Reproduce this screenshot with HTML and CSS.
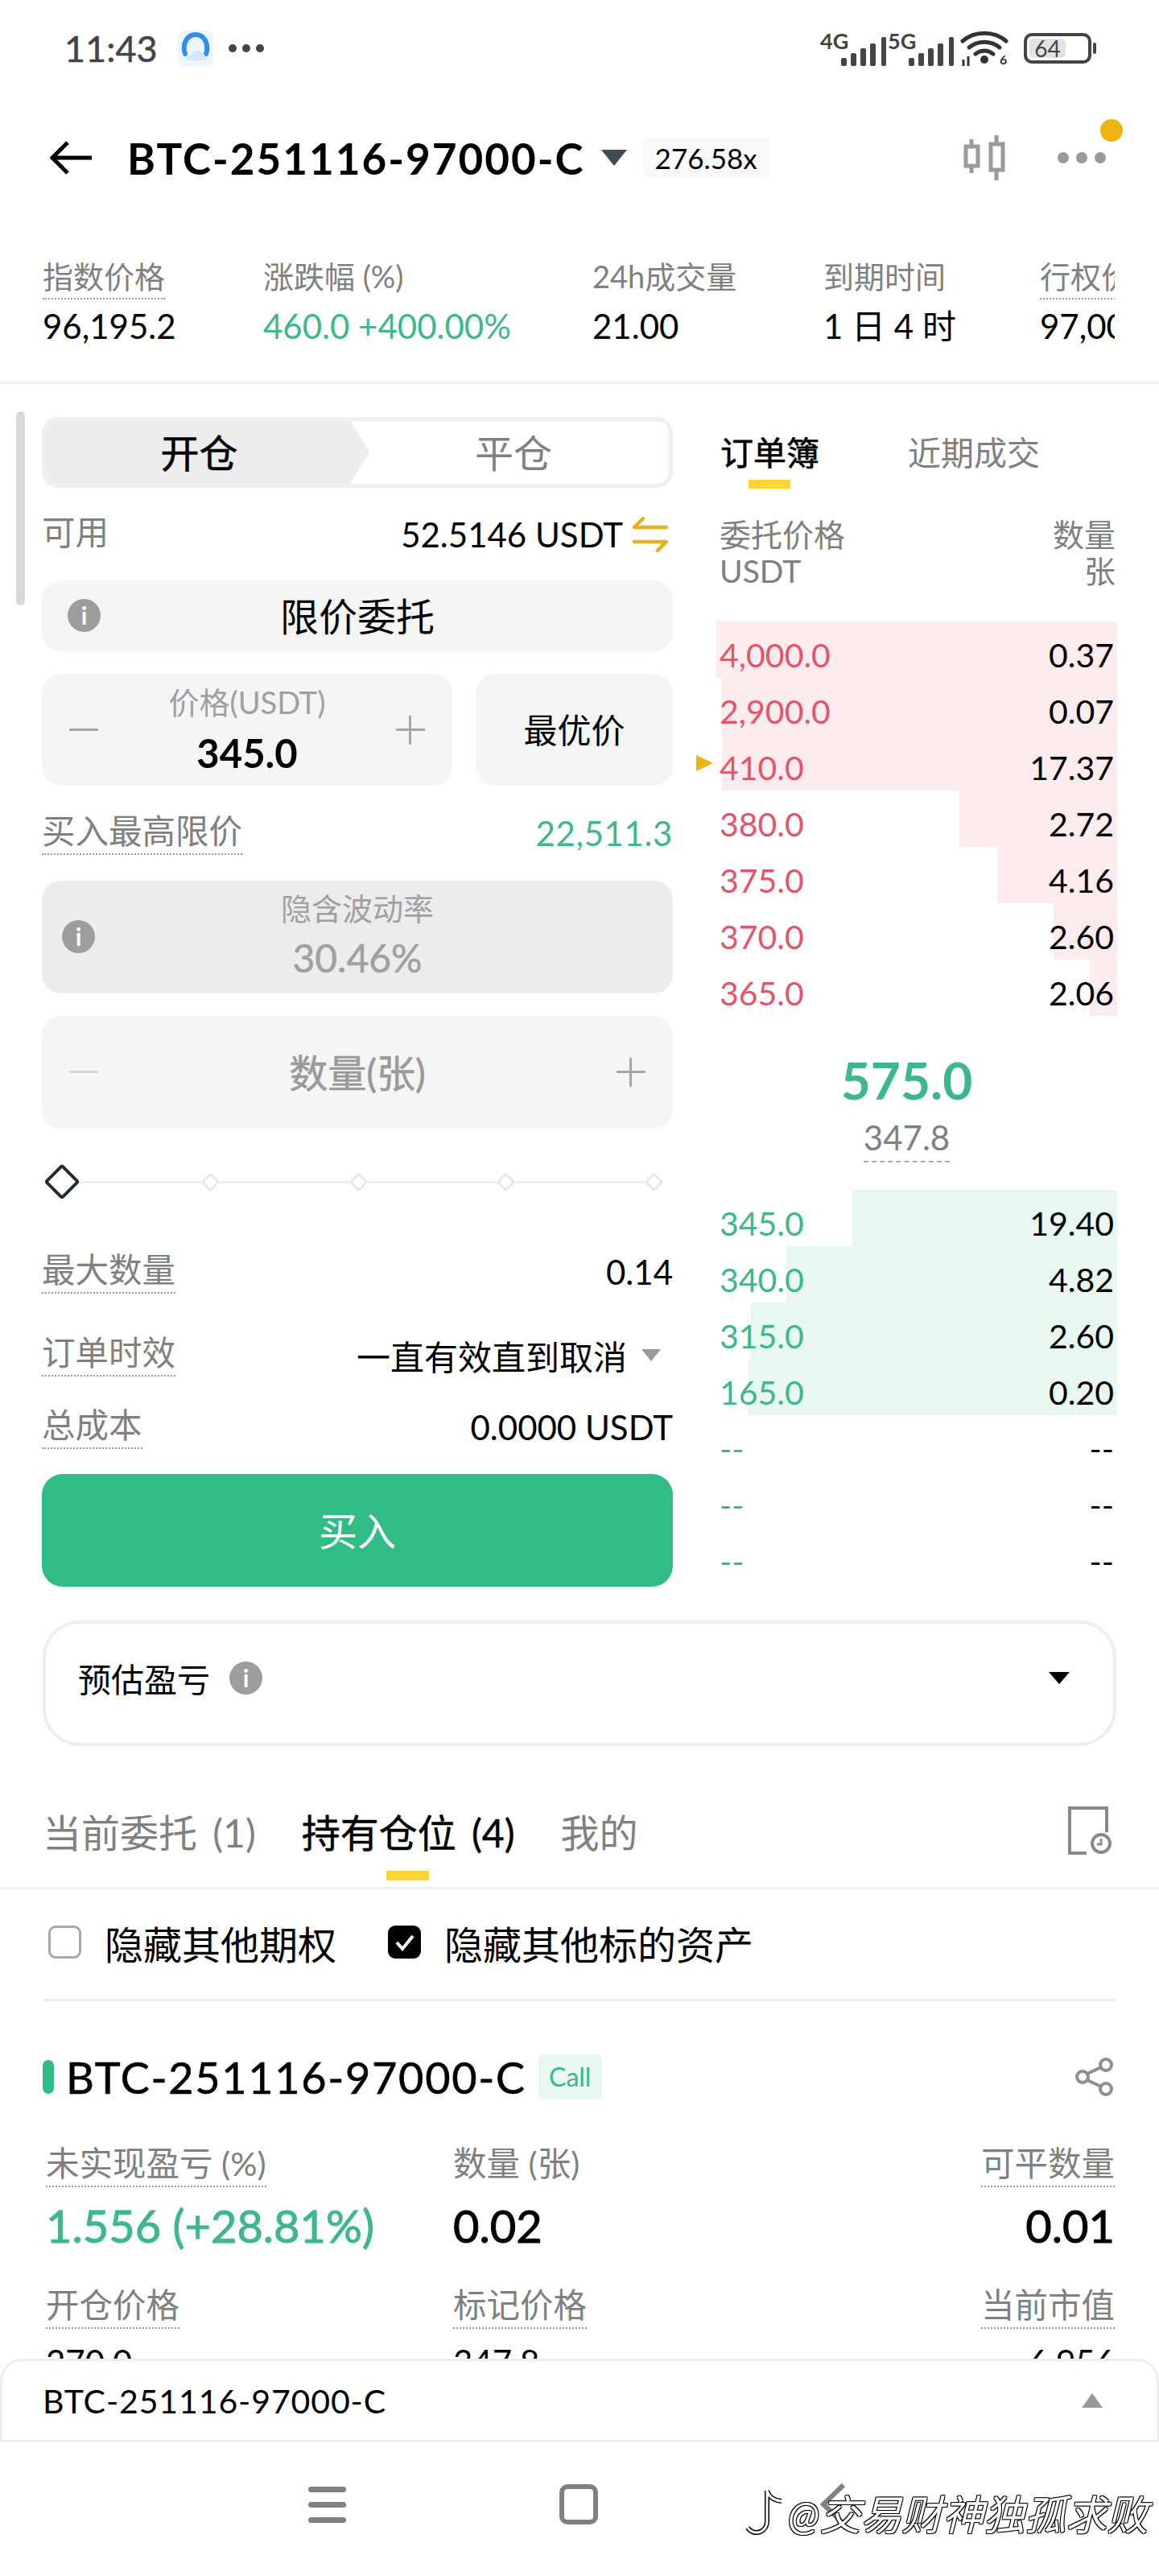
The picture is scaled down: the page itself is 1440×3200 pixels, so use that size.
FILE: index.html
```html
<!DOCTYPE html>
<html lang="zh-CN">
<head>
    <meta charset="UTF-8">
    <title>BTC-251116-97000-C</title>
    <link rel="stylesheet" href="styles.css">
</head>
<body>
    <div class="status">
        <span class="time">11:43</span>
        <svg class="app-logo" width="46" height="46" viewBox="0 0 46 46">
            <rect x="1" y="0" width="44" height="46" rx="10" fill="#eef5fd"/>
            <path d="M10 30C6 18 12 6 23 6s17 12 13 24" fill="none" stroke="#2f8ff0" stroke-width="6" stroke-linecap="round"/>
            <path d="M12 38c1-6 5-8 8-8 1-5 8-6 10-1 4 0 6 4 6 9H12z" fill="#d5e8fb"/>
        </svg>
        <span class="status-dots"><i></i><i></i><i></i></span>
        <div class="status-right">
            <div class="signal">
                <b>4G</b>
                <svg width="58" height="36" viewBox="0 0 58 36"><g fill="#444"><rect x="0" y="26" width="7" height="10" rx="2"/><rect x="12" y="20" width="7" height="16" rx="2"/><rect x="24" y="14" width="7" height="22" rx="2"/><rect x="36" y="8" width="7" height="28" rx="2"/><rect x="50" y="0" width="6" height="36" rx="2"/></g></svg>
            </div>
            <div class="signal">
                <b>5G</b>
                <svg width="58" height="36" viewBox="0 0 58 36"><g fill="#444"><rect x="0" y="26" width="7" height="10" rx="2"/><rect x="12" y="20" width="7" height="16" rx="2"/><rect x="24" y="14" width="7" height="22" rx="2"/><rect x="36" y="8" width="7" height="28" rx="2"/><rect x="50" y="0" width="6" height="36" rx="2"/></g></svg>
            </div>
            <svg class="wifi" width="60" height="44" viewBox="0 0 60 44">
                <g fill="none" stroke="#333" stroke-width="5" stroke-linecap="round">
                    <path d="M3 13C18 0 42 0 57 13"/>
                    <path d="M11 21c11-9 27-9 38 0"/>
                    <path d="M19 29c7-5 15-5 22 0"/>
                </g>
                <circle cx="30" cy="36" r="5" fill="#333"/>
                <text x="49" y="42" class="wifi-six">6</text>
                <path d="M4 36v8M10 32v12" stroke="#333" stroke-width="3"/>
            </svg>
            <div class="battery"><span class="battery-level">64</span></div>
        </div>
    </div>

    <div class="topbar">
        <svg class="back" width="54" height="42" viewBox="0 0 54 42"><path d="M52 21H4M22 2 3 21l19 19" fill="none" stroke="#000" stroke-width="5"/></svg>
        <span class="title">BTC-251116-97000-C</span>
        <span class="caret"></span>
        <span class="leverage">276.58x</span>
        <div class="topbar-right">
            <svg width="52" height="56" viewBox="0 0 52 56">
                <g fill="none" stroke="#9a9a9a" stroke-width="5">
                    <rect x="3" y="14" width="15" height="24"/>
                    <rect x="34" y="11" width="15" height="32"/>
                    <path d="M10 5v9M10 38v9M41 0v11M41 43v13"/>
                </g>
            </svg>
            <span class="more"><i></i><i></i><i></i><em class="more-dot"></em></span>
        </div>
    </div>

    <div class="stats">
        <div class="stat stat-index"><span class="label dotted">指数价格</span><span class="value">96,195.2</span></div>
        <div class="stat stat-change"><span class="label">涨跌幅 (%)</span><span class="value up">460.0 +400.00%</span></div>
        <div class="stat stat-vol"><span class="label">24h成交量</span><span class="value">21.00</span></div>
        <div class="stat stat-exp"><span class="label">到期时间</span><span class="value">1 日 4 时</span></div>
        <div class="stat"><span class="label dotted">行权价</span><span class="value">97,000.0</span></div>
    </div>

    <div class="scrollbar"></div>

    <div class="trade">
        <div class="form">
            <div class="side-tabs">
                <div class="side-on"><span>开仓</span></div>
                <div class="side-off">平仓</div>
            </div>
            <div class="row row-avail">
                <span class="label">可用</span>
                <span class="value">52.5146 USDT
                    <svg class="swap" width="44" height="44" viewBox="0 0 44 44"><g fill="none" stroke="#e8b020" stroke-width="4.5" stroke-linecap="round" stroke-linejoin="round"><path d="M42 13H2M13 2 2 13"/><path d="M2 31h40M31 42l11-11"/></g></svg>
                </span>
            </div>
            <div class="box box-type">
                <span class="info">i</span>
                <span class="box-title">限价委托</span>
            </div>
            <div class="price-line">
                <div class="box box-price">
                    <span class="step step-minus"></span>
                    <div class="price-mid"><span class="price-label">价格(USDT)</span><span class="price-val">345.0</span></div>
                    <span class="step step-plus"></span>
                </div>
                <div class="box box-best">最优价</div>
            </div>
            <div class="row row-max">
                <span class="label dotted">买入最高限价</span>
                <span class="value up">22,511.3</span>
            </div>
            <div class="box box-iv">
                <span class="info">i</span>
                <div class="iv-mid"><span>隐含波动率</span><span class="iv-val">30.46%</span></div>
            </div>
            <div class="box box-qty">
                <span class="step step-minus step-off"></span>
                <span class="qty-text">数量(张)</span>
                <span class="step step-plus"></span>
            </div>
            <div class="slider">
                <span class="knob knob-on"></span>
                <span class="track"></span><span class="knob"></span>
                <span class="track"></span><span class="knob"></span>
                <span class="track"></span><span class="knob"></span>
                <span class="track"></span><span class="knob"></span>
            </div>
            <div class="row row-a">
                <span class="label dotted">最大数量</span>
                <span class="value">0.14</span>
            </div>
            <div class="row row-b">
                <span class="label dotted">订单时效</span>
                <span class="value">一直有效直到取消<span class="caret-grey"></span></span>
            </div>
            <div class="row row-c">
                <span class="label dotted">总成本</span>
                <span class="value">0.0000 USDT</span>
            </div>
            <div class="buy">买入</div>
        </div>

        <div class="book">
            <div class="book-tabs">
                <span class="book-tab-on">订单簿</span>
                <span>近期成交</span>
            </div>
            <div class="book-head">
                <div><div>委托价格</div><div>USDT</div></div>
                <div class="right"><div>数量</div><div>张</div></div>
            </div>
            <div class="ob-row ask"><span class="bar" style="width:498px"></span><span>4,000.0</span><span class="qty">0.37</span></div>
            <div class="ob-row ask"><span class="bar" style="width:492px"></span><span>2,900.0</span><span class="qty">0.07</span></div>
            <div class="ob-row ask"><span class="bar" style="width:491px"></span><span class="mine"></span><span>410.0</span><span class="qty">17.37</span></div>
            <div class="ob-row ask"><span class="bar" style="width:196px"></span><span>380.0</span><span class="qty">2.72</span></div>
            <div class="ob-row ask"><span class="bar" style="width:149px"></span><span>375.0</span><span class="qty">4.16</span></div>
            <div class="ob-row ask"><span class="bar" style="width:79px"></span><span>370.0</span><span class="qty">2.60</span></div>
            <div class="ob-row ask"><span class="bar" style="width:34px"></span><span>365.0</span><span class="qty">2.06</span></div>
            <div class="mid">
                <div class="mid-last">575.0</div>
                <div class="mid-mark">347.8</div>
            </div>
            <div class="ob-row bid"><span class="bar" style="width:329px"></span><span>345.0</span><span class="qty">19.40</span></div>
            <div class="ob-row bid"><span class="bar" style="width:411px"></span><span>340.0</span><span class="qty">4.82</span></div>
            <div class="ob-row bid"><span class="bar" style="width:455px"></span><span>315.0</span><span class="qty">2.60</span></div>
            <div class="ob-row bid"><span class="bar" style="width:458px"></span><span>165.0</span><span class="qty">0.20</span></div>
            <div class="ob-row bid"><span>--</span><span class="qty">--</span></div>
            <div class="ob-row bid"><span>--</span><span class="qty">--</span></div>
            <div class="ob-row bid"><span>--</span><span class="qty">--</span></div>
        </div>
    </div>

    <div class="estimate">
        <span>预估盈亏</span>
        <span class="info">i</span>
        <span class="caret-black"></span>
    </div>

    <div class="tabs">
        <span class="tab">当前委托 (1)</span>
        <span class="tab tab-on">持有仓位 (4)</span>
        <span class="tab">我的</span>
        <svg class="history" width="56" height="62" viewBox="0 0 56 62">
            <path d="M24 59H3V3h46v30" fill="none" stroke="#8a8a8a" stroke-width="4"/>
            <circle cx="42" cy="47" r="11" fill="#fff" stroke="#8a8a8a" stroke-width="4"/>
            <path d="M42 41v7h-5" fill="none" stroke="#8a8a8a" stroke-width="3"/>
        </svg>
    </div>

    <div class="filters">
        <span class="check"></span>
        <span class="filter-text">隐藏其他期权</span>
        <span class="check check-on">
            <svg width="28" height="24" viewBox="0 0 28 24"><path d="M4 12l7 8L24 4" fill="none" stroke="#fff" stroke-width="4"/></svg>
        </span>
        <span class="filter-text">隐藏其他标的资产</span>
    </div>

    <div class="position">
        <div class="pos-head">
            <span class="pos-mark"></span>
            <span class="pos-name">BTC-251116-97000-C</span>
            <span class="call">Call</span>
            <svg class="share" width="50" height="48" viewBox="0 0 50 48">
                <g fill="none" stroke="#8f8f8f" stroke-width="4">
                    <circle cx="10" cy="24" r="7"/><circle cx="39" cy="9" r="7"/><circle cx="39" cy="39" r="7"/>
                    <path d="M16 20 33 12M16 28l17 8"/>
                </g>
            </svg>
        </div>
        <div class="pos-grid">
            <div class="cell"><span class="label dotted">未实现盈亏 (%)</span><span class="pos-val up">1.556 (+28.81%)</span></div>
            <div class="cell"><span class="label">数量 (张)</span><span class="pos-val">0.02</span></div>
            <div class="cell cell-right"><span class="label dotted">可平数量</span><span class="pos-val">0.01</span></div>
            <div class="cell"><span class="label dotted">开仓价格</span><span class="pos-sub">270.0</span></div>
            <div class="cell"><span class="label dotted">标记价格</span><span class="pos-sub">347.8</span></div>
            <div class="cell cell-right"><span class="label dotted">当前市值</span><span class="pos-sub">6.956</span></div>
        </div>
    </div>

    <div class="bottom">
        <div class="ticker">
            <span>BTC-251116-97000-C</span>
            <span class="caret-up"></span>
        </div>
        <div class="navbar">
            <span class="nav-menu"><i></i><i></i><i></i></span>
            <span class="nav-home"></span>
            <svg class="nav-back" width="34" height="54" viewBox="0 0 34 54"><path d="M30 3 5 27l25 24" fill="none" stroke="#808080" stroke-width="6"/></svg>
        </div>
    </div>

    <div class="watermark">
        <svg width="52" height="66" viewBox="0 0 52 66">
            <path d="M28 6v38c0 8-6 14-13 14-5 0-9-3-11-6M28 6c2 7 8 12 18 13" fill="none" stroke="#000" stroke-width="6"/>
            <path d="M28 6v38c0 8-6 14-13 14-5 0-9-3-11-6M28 6c2 7 8 12 18 13" fill="none" stroke="#fff" stroke-width="3"/>
        </svg>
        <span>@交易财神独孤求败</span>
    </div>
</body>
</html>
```

FILE: styles.css
```css
* {
    box-sizing: border-box;
}
body {
    margin: 0;
    width: 1440px;
    height: 3200px;
    overflow: hidden;
    position: relative;
    background: #fff;
    color: #000;
    font-family: Lato, "Noto Sans CJK SC", sans-serif;
    font-size: 40px;
}
i, em {
    font-style: normal;
}
.up {
    color: #3cb88a;
}
.label {
    color: #808080;
    font-size: 41.5px;
    line-height: 48px;
    white-space: nowrap;
    border-bottom: 2px solid transparent;
    padding-bottom: 4px;
}
.label.dotted {
    border-bottom: 2px dotted #999;
}

/* status bar */
.status {
    height: 120px;
    display: flex;
    align-items: center;
    padding-left: 80px;
    padding-right: 84px;
}
.time {
    font-size: 45px;
    color: #444;
    width: 140px;
    -webkit-text-stroke: 0.5px #444;
}
.app-logo {
    margin-right: 18px;
}
.status-dots {
    display: flex;
    gap: 7px;
}
.status-dots i {
    width: 10px;
    height: 10px;
    border-radius: 50%;
    background: #444;
}
.status-right {
    margin-left: auto;
    display: flex;
    align-items: center;
}
.signal {
    position: relative;
    width: 84px;
    height: 44px;
    display: flex;
    justify-content: flex-end;
    align-items: flex-end;
}
.signal b {
    position: absolute;
    left: 0;
    top: 1px;
    font-size: 27px;
    color: #444;
    line-height: 24px;
}
.wifi {
    margin-left: 6px;
    margin-right: 19px;
}
.wifi-six {
    font-size: 16px;
    font-weight: 700;
    fill: #333;
}
.battery {
    width: 84px;
    height: 38px;
    border: 4px solid #444;
    border-radius: 10px;
    padding: 3px;
    display: flex;
    position: relative;
}
.battery::after {
    content: "";
    position: absolute;
    right: -10px;
    top: 8px;
    width: 4px;
    height: 14px;
    background: #444;
    border-radius: 2px;
}
.battery-level {
    width: 64%;
    background: #e2e2e2;
    border-radius: 5px;
    color: #444;
    font-size: 28px;
    line-height: 24px;
    text-align: center;
}

/* title bar */
.topbar {
    height: 152px;
    display: flex;
    align-items: center;
    padding-left: 62px;
    padding-right: 66px;
}
.back {
    margin-right: 42px;
}
.title {
    font-size: 53px;
    font-weight: 700;
    letter-spacing: 2px;
    white-space: nowrap;
}
.caret {
    width: 0;
    height: 0;
    border-left: 16px solid transparent;
    border-right: 16px solid transparent;
    border-top: 20px solid #444a55;
    margin-left: 20px;
    margin-right: 20px;
}
.leverage {
    background: #f9f9f9;
    border-radius: 8px;
    font-size: 35px;
    line-height: 50px;
    padding: 0 15px;
}
.topbar-right {
    margin-left: auto;
    display: flex;
    align-items: center;
    gap: 65px;
}
.more {
    display: flex;
    gap: 9px;
    position: relative;
}
.more i {
    width: 14px;
    height: 14px;
    border-radius: 50%;
    background: #9a9a9a;
}
.more-dot {
    position: absolute;
    right: -21px;
    top: -41px;
    width: 28px;
    height: 28px;
    border-radius: 50%;
    background: #edb30f;
}

/* stats under the title */
.stats {
    height: 204px;
    margin: 0 55px 0 53px;
    padding-top: 48px;
    display: flex;
    overflow: hidden;
    position: relative;
}
.stat {
    display: flex;
    flex-direction: column;
    align-items: flex-start;
    flex-shrink: 0;
    gap: 8px;
}
.stat .label {
    font-size: 38px;
    line-height: 46px;
    height: 52px;
}
.stat .value {
    font-size: 42px;
    line-height: 50px;
    white-space: nowrap;
}
.stat-index {
    width: 274px;
}
.stat-change {
    width: 409px;
}
.stat-vol {
    width: 287px;
}
.stat-exp {
    width: 269px;
}
.trade {
    border-top: 3px solid #f0f0f0;
    margin-top: -2px;
    padding-top: 41px;
    padding-left: 52px;
    display: flex;
    gap: 54px;
    height: 1537px;
}
.scrollbar {
    position: absolute;
    left: 20px;
    top: 511px;
    width: 11px;
    height: 241px;
    border-radius: 6px;
    background: #d8d8d8;
}

/* left form */
.form {
    width: 784px;
}
.side-tabs {
    height: 88px;
    border: 5px solid #efefef;
    border-radius: 20px;
    display: flex;
    position: relative;
    overflow: hidden;
    font-size: 48px;
}
.side-on {
    width: 407px;
    margin: -5px 0 -5px -5px;
    background: #ededed;
    clip-path: polygon(0 0, 380px 0, 100% 50%, 380px 100%, 0 100%);
    display: flex;
    align-items: center;
    justify-content: center;
    padding-right: 16px;
    padding-bottom: 4px;
    -webkit-text-stroke: 0.6px #000;
}
.side-off {
    flex: 1;
    display: flex;
    align-items: center;
    justify-content: center;
    color: #808080;
    padding-bottom: 4px;
    margin-left: -14px;
}
.row {
    display: flex;
    justify-content: space-between;
    align-items: center;
}
.row .value {
    font-size: 42px;
    white-space: nowrap;
    display: flex;
    align-items: center;
}
.row-avail {
    height: 115px;
}
.swap {
    margin-left: 12px;
    margin-right: 6px;
}
.row-max {
    height: 118px;
}
.row-max .value {
    letter-spacing: 0.6px;
}
.row-a {
    height: 92px;
}
.row-b {
    height: 114px;
}
.row-c {
    height: 66px;
    margin-bottom: 25px;
}
.box {
    background: #f5f5f5;
    border-radius: 24px;
    display: flex;
    align-items: center;
}
.box-type {
    height: 88px;
    position: relative;
    justify-content: center;
    margin-bottom: 28px;
    padding-bottom: 4px;
}
.box-type .info {
    position: absolute;
    left: 32px;
    top: 23px;
}
.box-title {
    font-size: 48px;
}
.info {
    width: 41px;
    height: 41px;
    border-radius: 50%;
    background: #9d9d9d;
    color: #fff;
    font-size: 30px;
    font-weight: 700;
    line-height: 41px;
    text-align: center;
    flex-shrink: 0;
}
.price-line {
    display: flex;
    gap: 29px;
}
.box-price {
    width: 510px;
    height: 139px;
    padding: 0 34px;
    justify-content: space-between;
}
.step {
    width: 36px;
    height: 36px;
    position: relative;
}
.step::before {
    content: "";
    position: absolute;
    left: 0;
    right: 0;
    top: 16px;
    height: 3px;
    background: #a6a6a6;
}
.step-plus::after {
    content: "";
    position: absolute;
    top: 0;
    bottom: 0;
    left: 16px;
    width: 3px;
    background: #a6a6a6;
}
.step-off::before {
    background: #d6d6d6;
}
.price-mid {
    display: flex;
    flex-direction: column;
    align-items: center;
}
.price-label {
    color: #a0a0a0;
    font-size: 38px;
    line-height: 46px;
    margin-top: -4px;
    margin-bottom: 14px;
}
.price-val {
    font-size: 49px;
    line-height: 52px;
    font-weight: 700;
}
.box-best {
    width: 245px;
    height: 139px;
    justify-content: center;
    font-size: 42px;
    padding-bottom: 4px;
}
.box-iv {
    height: 140px;
    background: #ececec;
    position: relative;
    justify-content: center;
    margin-bottom: 28px;
}
.box-iv .info {
    position: absolute;
    left: 25px;
    top: 49px;
}
.iv-mid {
    display: flex;
    flex-direction: column;
    align-items: center;
    color: #a0a0a0;
    font-size: 38px;
    line-height: 46px;
    margin-top: -4px;
}
.iv-val {
    font-size: 48px;
    line-height: 58px;
    margin-top: 10px;
    -webkit-text-stroke: 0.5px #a0a0a0;
}
.box-qty {
    height: 140px;
    padding: 0 34px 0 34px;
    justify-content: space-between;
}
.qty-text {
    color: #9a9a9a;
    font-size: 48px;
    padding-bottom: 4px;
    -webkit-text-stroke: 0.6px #9a9a9a;
}
.slider {
    height: 132px;
    display: flex;
    align-items: center;
    margin-right: 12px;
}
.track {
    flex: 1;
    height: 3px;
    background: #ededed;
}
.knob {
    width: 17px;
    height: 17px;
    margin: 0 3px;
    transform: rotate(45deg);
    border: 3px solid #e8e8e8;
    border-radius: 3px;
    background: #fff;
}
.knob-on {
    width: 32px;
    height: 32px;
    margin: 0 -4px 0 9px;
    border: 4px solid #252b36;
    border-radius: 4px;
}
.caret-grey {
    width: 0;
    height: 0;
    border-left: 12px solid transparent;
    border-right: 12px solid transparent;
    border-top: 15px solid #999;
    margin-left: 18px;
    margin-right: 15px;
}
.buy {
    height: 140px;
    background: #2fbd85;
    border-radius: 26px;
    color: #fff;
    font-size: 48px;
    padding-bottom: 4px;
    display: flex;
    align-items: center;
    justify-content: center;
}

/* order book */
.book {
    width: 498px;
}
.book-tabs {
    height: 89px;
    display: flex;
    gap: 110px;
    padding-left: 5px;
    padding-top: 16px;
    font-size: 41px;
    line-height: 58px;
    color: #808080;
    position: relative;
}
.book-tab-on {
    color: #000;
    -webkit-text-stroke: 0.7px #000;
}
.book-tab-on::after {
    content: "";
    position: absolute;
    left: 40px;
    bottom: 0;
    width: 52px;
    height: 11px;
    background: #fcd535;
}
.book-head {
    height: 165px;
    padding: 35px 2px 0 4px;
    display: flex;
    justify-content: space-between;
    color: #808080;
    font-size: 39px;
    line-height: 45px;
}
.right {
    text-align: right;
}
.ob-row {
    height: 70px;
    position: relative;
    display: flex;
    justify-content: space-between;
    align-items: center;
    padding: 12px 4px 0 4px;
    font-size: 41px;
}
.bar {
    position: absolute;
    right: 0;
    top: 0;
    bottom: 0;
    z-index: -1;
}
.ask {
    color: #e0566a;
}
.ask .bar {
    background: #fdecee;
}
.bid {
    color: #3cb88a;
}
.bid .bar {
    background: #e8f7f0;
}
.qty {
    color: #000;
}
.mine {
    position: absolute;
    left: -25px;
    top: 26px;
    width: 0;
    height: 0;
    border-top: 10px solid transparent;
    border-bottom: 10px solid transparent;
    border-left: 21px solid #edb30f;
}
.mid {
    height: 216px;
    display: flex;
    flex-direction: column;
    align-items: center;
    padding-top: 44px;
    padding-right: 25px;
}
.mid-last {
    color: #3cb88a;
    font-size: 64px;
    font-weight: 700;
    line-height: 72px;
}
.mid-mark {
    margin-top: 10px;
    color: #808080;
    font-size: 42px;
    line-height: 50px;
    border-bottom: 2px dashed #aaa;
    padding-bottom: 4px;
}

/* estimate card */
.estimate {
    height: 156px;
    margin: 2px 53px 0;
    border: 4px solid #eee;
    border-radius: 46px;
    padding: 0 54px 14px 40px;
    display: flex;
    align-items: center;
    font-size: 41px;
}
.estimate .info {
    margin-left: 24px;
}
.caret-black {
    width: 0;
    height: 0;
    margin-left: auto;
    border-left: 13px solid transparent;
    border-right: 13px solid transparent;
    border-top: 15px solid #000;
}

/* tabs */
.tabs {
    height: 178px;
    padding: 34px 58px 0 53px;
    border-bottom: 3px solid #eee;
    display: flex;
    align-items: center;
    gap: 57px;
    color: #808080;
    font-size: 48px;
    word-spacing: 7px;
}
.tab {
    position: relative;
    white-space: nowrap;
}
.tab-on {
    color: #000;
    -webkit-text-stroke: 0.5px #000;
}
.tab-on::after {
    content: "";
    position: absolute;
    left: 105px;
    top: 85px;
    width: 53px;
    height: 12px;
    background: #fcd535;
}
.history {
    margin-left: auto;
}

/* filters */
.filters {
    height: 139px;
    margin: 0 53px;
    padding-bottom: 5px;
    padding-left: 7px;
    border-bottom: 3px solid #eee;
    display: flex;
    align-items: center;
    font-size: 48px;
}
.check {
    width: 41px;
    height: 41px;
    border: 3px solid #a8a8a8;
    border-radius: 9px;
    margin-right: 29px;
    display: flex;
    align-items: center;
    justify-content: center;
}
.check-on {
    background: #000;
    border-color: #000;
}
.filter-text {
    margin-right: 64px;
}

/* position card */
.position {
    margin: 0 55px 0 53px;
    padding-top: 66px;
}
.pos-head {
    height: 56px;
    display: flex;
    align-items: center;
}
.pos-mark {
    width: 14px;
    height: 42px;
    border-radius: 7px;
    background: #2fbd85;
    margin-right: 15px;
}
.pos-name {
    font-size: 54px;
    letter-spacing: 1.7px;
    white-space: nowrap;
    -webkit-text-stroke: 0.6px #000;
}
.call {
    margin-left: 15px;
    width: 79px;
    height: 56px;
    background: #e8f7f0;
    border-radius: 6px;
    color: #3cb88a;
    font-size: 32px;
    line-height: 56px;
    text-align: center;
}
.share {
    margin-left: auto;
}
.pos-grid {
    margin-top: 55px;
    display: grid;
    grid-template-columns: 506px 1fr auto;
    row-gap: 46px;
    padding-left: 4px;
}
.cell {
    display: flex;
    flex-direction: column;
    align-items: flex-start;
    height: 130px;
}
.cell-right {
    align-items: flex-end;
}
.pos-val {
    margin-top: 16px;
    font-size: 56px;
    line-height: 64px;
    white-space: nowrap;
    -webkit-text-stroke: 1px currentColor;
}
.pos-sub {
    margin-top: 16px;
    font-size: 42px;
    line-height: 50px;
}

/* ticker + android nav, pinned over the page */
.bottom {
    position: absolute;
    left: 0;
    right: 0;
    bottom: 0;
    height: 270px;
    background: #fff;
}
.ticker {
    height: 104px;
    border: 3px solid #eee;
    border-radius: 28px 28px 0 0;
    padding: 0 67px 0 50px;
    display: flex;
    justify-content: space-between;
    align-items: center;
    font-size: 41px;
    letter-spacing: 0.9px;
    background: #fff;
}
.caret-up {
    width: 0;
    height: 0;
    border-left: 13px solid transparent;
    border-right: 13px solid transparent;
    border-bottom: 18px solid #999;
}
.navbar {
    height: 166px;
    display: flex;
    align-items: center;
    padding-left: 383px;
    padding-bottom: 12px;
}
.nav-menu {
    width: 47px;
    display: flex;
    flex-direction: column;
    gap: 12px;
    margin-right: 265px;
}
.nav-menu i {
    height: 7px;
    border-radius: 4px;
    background: #808080;
}
.nav-home {
    width: 48px;
    height: 50px;
    border: 6px solid #808080;
    border-radius: 10px;
    margin-right: 275px;
}
.watermark {
    position: absolute;
    left: 925px;
    top: 3084px;
    display: flex;
    align-items: center;
    gap: 2px;
    color: #fff;
    font-size: 51px;
    font-style: italic;
    text-shadow: 1px 1px 0 #000, -1px -1px 0 #000, 1px -1px 0 #000, -1px 1px 0 #000;
    white-space: nowrap;
}
```
